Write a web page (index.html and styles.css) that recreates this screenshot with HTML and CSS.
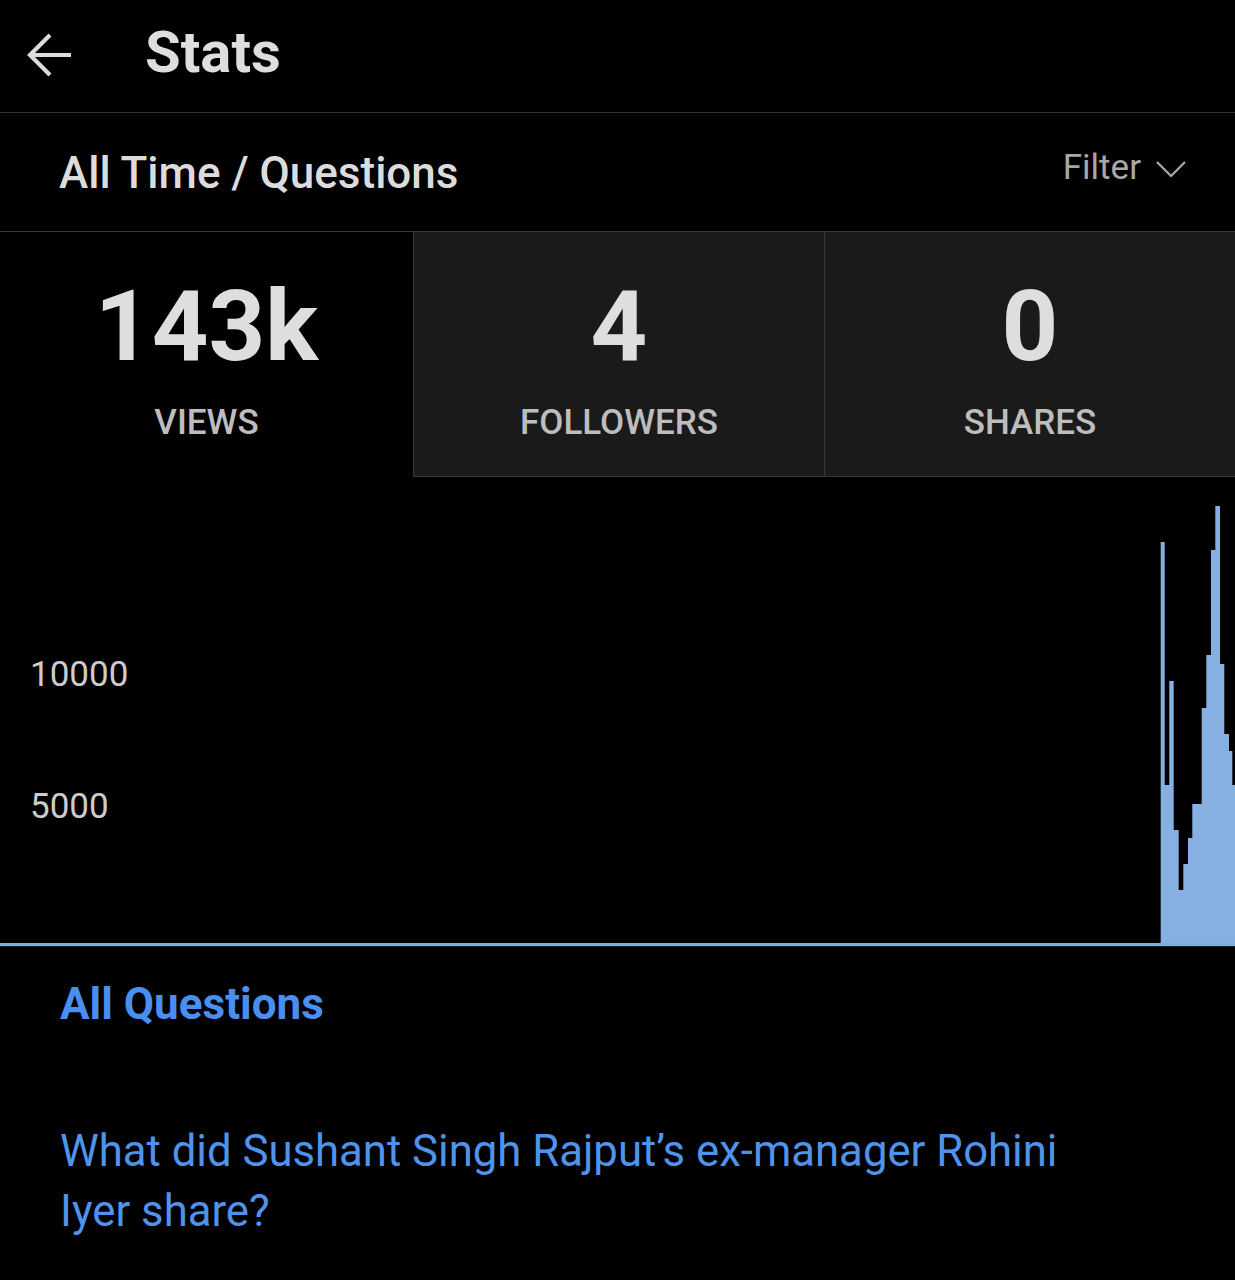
FILE: index.html
```html
<!DOCTYPE html>
<html lang="en">
<head>
<meta charset="utf-8">
<title>Stats</title>
<link rel="stylesheet" href="styles.css">
</head>
<body>
<header class="topbar">
  <svg class="back" viewBox="0 0 46 46" width="46" height="46" aria-hidden="true">
    <path d="M44 23H3M23 3L3 23L23 43" fill="none" stroke="#dcdcdc" stroke-width="4.2" stroke-linecap="butt" stroke-linejoin="miter"/>
  </svg>
  <h1 class="title">Stats</h1>
</header>
<section class="subbar">
  <div class="crumb">All Time / Questions</div>
  <div class="filter">Filter
    <svg class="chev" viewBox="0 0 30 16" width="30" height="16" aria-hidden="true">
      <path d="M1 1L15 15L29 1" fill="none" stroke="#aaaaaa" stroke-width="2.2"/>
    </svg>
  </div>
</section>
<section class="tiles">
  <div class="tile active">
    <div class="num">143k</div>
    <div class="label">VIEWS</div>
  </div>
  <div class="tile">
    <div class="num">4</div>
    <div class="label">FOLLOWERS</div>
  </div>
  <div class="tile">
    <div class="num">0</div>
    <div class="label">SHARES</div>
  </div>
</section>
<section class="chart">
  <svg class="plot" viewBox="0 0 1235 470" width="1235" height="470" preserveAspectRatio="none" aria-hidden="true">
    <path fill="#86b0e2" d="M1160.7 466 V65 H1164.7 V308 H1169.3 V204 H1173.7 V353 H1178.7 V413 H1183.3 V387 H1188 V361 H1192.3 V327 H1201.7 V231 H1206.3 V178 H1211 V73 H1215.3 V29 H1220 V187 H1224.3 V257 H1229 V274 H1232.3 V308 H1235 V466 Z"/>
    <rect x="0" y="466" width="1235" height="3.2" fill="#84acdb"/>
  </svg>
  <div class="ylabel y10k">10000</div>
  <div class="ylabel y5k">5000</div>
</section>
<section class="list">
  <h2 class="list-title">All Questions</h2>
  <p class="question">What did Sushant Singh Rajput’s ex-manager Rohini Iyer share?</p>
</section>
</body>
</html>
```
FILE: styles.css
```css
html, body {
  margin: 0;
  padding: 0;
  background: #000;
}
body {
  width: 1235px;
  font-family: Roboto, "Noto Sans", "Liberation Sans", sans-serif;
  color: #dcdcdc;
  overflow: hidden;
}
.topbar {
  height: 112px;
  display: flex;
  align-items: center;
  border-bottom: 1px solid #333;
  box-sizing: content-box;
}
.back {
  margin-left: 27px;
  margin-top: -2px;
  flex: none;
}
.title {
  margin: 0 0 0 72px;
  font-size: 58px;
  font-weight: 700;
  color: #dedede;
  line-height: 1;
  margin-top: -8px;
}
.subbar {
  height: 118px;
  display: flex;
  align-items: center;
  justify-content: space-between;
  padding: 0 49px 0 59px;
}
.crumb {
  font-size: 44px;
  font-weight: 500;
  color: #dcdcdc;
  margin-top: 2px;
}
.filter {
  display: flex;
  align-items: center;
  gap: 15px;
  font-size: 35px;
  color: #a8a8a8;
  margin-top: -10px;
}
.chev {
  margin-top: 4px;
}
.tiles {
  display: grid;
  grid-template-columns: 413px 411px 1fr;
  height: 245px;
  border-top: 1px solid #3a3a3a;
}
.tile {
  display: flex;
  flex-direction: column;
  align-items: center;
  background: #1a1a1a;
  border-left: 1px solid #3a3a3a;
  border-bottom: 1px solid #3a3a3a;
  box-sizing: border-box;
}
.tile.active {
  background: #000;
  border: none;
}
.num {
  font-size: 99px;
  font-weight: 700;
  line-height: 1;
  color: #dedede;
  margin-top: 45px;
}
.label {
  font-size: 35px;
  font-weight: 500;
  color: #bdbdbd;
  line-height: 1;
  margin-top: 29px;
}
.chart {
  position: relative;
  height: 470px;
}
.plot {
  display: block;
}
.ylabel {
  position: absolute;
  left: 30px;
  font-size: 35px;
  color: #cccccc;
  line-height: 1;
}
.y10k { top: 180px; }
.y5k { top: 312px; }
.list {
  padding: 0 60px;
}
.list-title {
  margin: 31px 0 0;
  font-size: 44px;
  font-weight: 700;
  color: #4a8ff0;
  line-height: 1.2;
}
.question {
  margin: 90px 0 0;
  max-width: 1030px;
  font-size: 43.7px;
  font-weight: 400;
  color: #4f94ea;
  line-height: 60px;
}
```
